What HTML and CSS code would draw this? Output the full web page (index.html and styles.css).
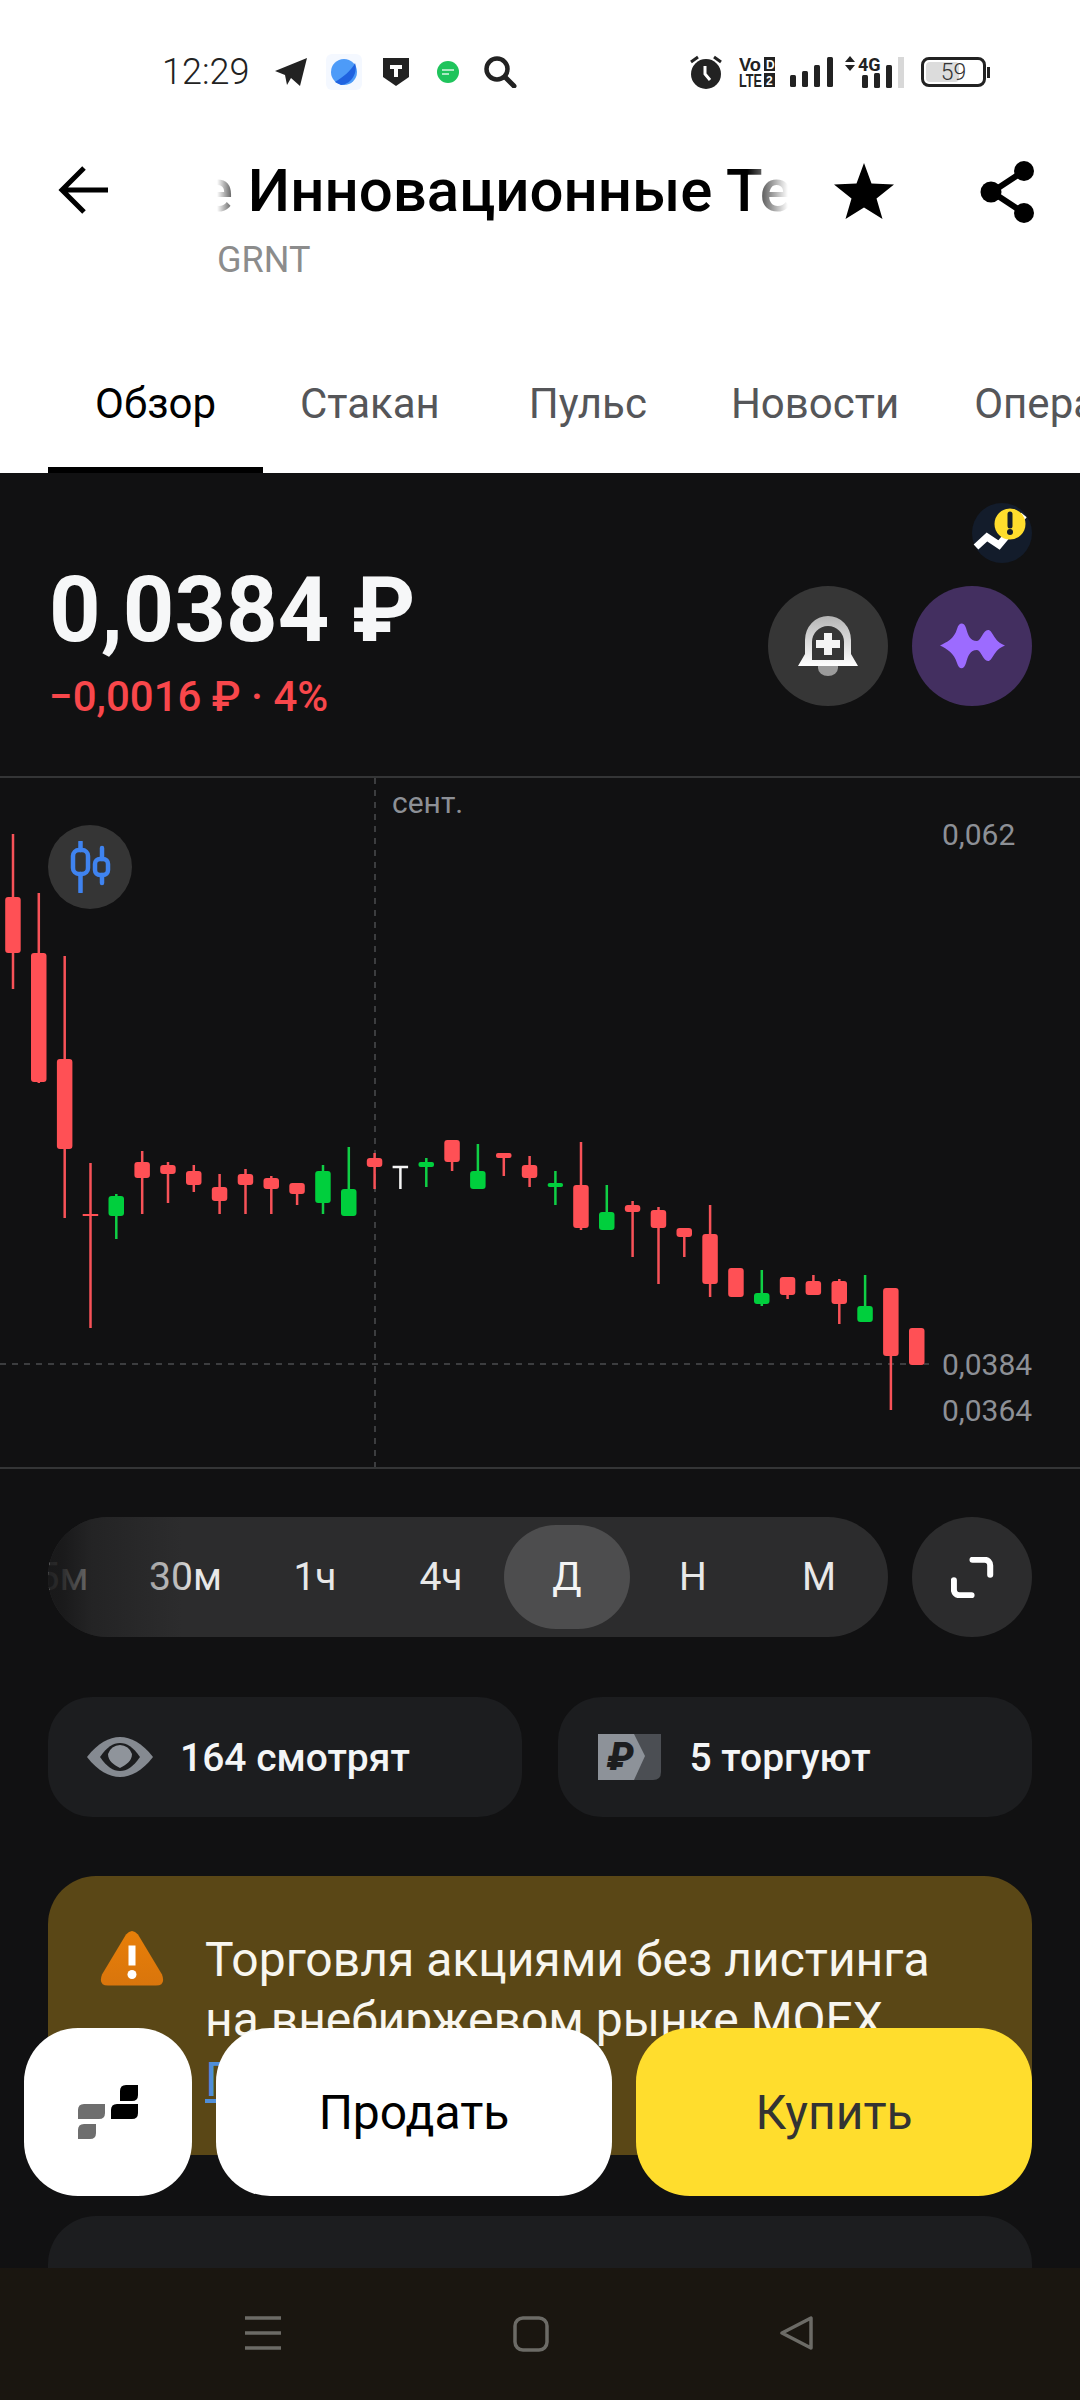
FILE: index.html
```html
<!DOCTYPE html>
<html lang="ru">
<head>
<meta charset="utf-8">
<title>GRNT</title>
<link rel="stylesheet" href="styles.css">
</head>
<body>
<div class="phone">
  <div class="status">
    <div class="status-left">
      <span class="time">12:29</span>
      <svg class="st-tg" viewBox="0 0 32 28"><path d="M32 0 25 28 16 20 12 27 10 17 0 13Z" fill="#222"/></svg>
      <svg class="st-planet" viewBox="0 0 36 36"><rect width="36" height="36" rx="6" fill="#f4f8ff"/><circle cx="18" cy="18" r="13" fill="#4d9bf8"/><path d="M9 28C16 24 26 16 29 9 32 18 26 30 15 31Z" fill="#1f62e0"/></svg>
      <svg class="st-shield" viewBox="0 0 26 28"><path d="M0 0H26V19L13 28 0 19Z" fill="#222"/><path d="M7 7H19V11H15V19H11V11H7Z" fill="#fff"/></svg>
      <svg class="st-msg" viewBox="0 0 22 22"><circle cx="11" cy="11" r="11" fill="#1fc45c"/><path d="M5 9H17M5 13H12" stroke="#d8f5e2" stroke-width="1.6"/></svg>
      <svg class="st-search" viewBox="0 0 34 32"><circle cx="14" cy="13" r="10.5" fill="none" stroke="#222" stroke-width="4.5"/><path d="M22 21 31 30" stroke="#222" stroke-width="5" stroke-linecap="round"/></svg>
    </div>
    <div class="status-right">
      <svg class="st-alarm" viewBox="0 0 32 34"><circle cx="16" cy="19" r="15" fill="#222"/><path d="M15 11V19L20 25" stroke="#fff" stroke-width="3" fill="none"/><path d="M1 7 8 2M31 7 24 2" stroke="#222" stroke-width="3"/></svg>
      <svg class="st-volte" viewBox="0 0 36 30"><text x="0" y="14" class="st-small" textLength="22" lengthAdjust="spacingAndGlyphs">Vo</text><rect x="25" y="0" width="11" height="14" fill="#222"/><text x="27" y="12" class="st-tiny">D</text><text x="0" y="30" class="st-small" textLength="23" lengthAdjust="spacingAndGlyphs">LTE</text><rect x="25" y="16" width="11" height="14" fill="#222"/><text x="27" y="28" class="st-tiny">2</text></svg>
      <svg class="st-bars" viewBox="0 0 44 30"><rect x="0" y="18" width="6" height="12" rx="1.5"/><rect x="12" y="14" width="6" height="16" rx="1.5"/><rect x="24" y="8" width="6" height="22" rx="1.5"/><rect x="37" y="0" width="6" height="30" rx="1.5"/></svg>
      <svg class="st-4g" viewBox="0 0 60 32"><path d="M0 6 5 0 10 6ZM0 9H10L5 15Z" fill="#222"/><text x="13" y="15" class="st-4gt">4G</text><rect x="17" y="19" width="6" height="13" rx="1.5"/><rect x="29" y="17" width="6" height="15" rx="1.5"/><rect x="41" y="9" width="6" height="23" rx="1.5"/><rect x="53" y="1" width="6" height="31" fill="#d8d8d8"/></svg>
      <div class="battery"><span class="battery-fill"></span><span class="battery-num">59</span></div>
    </div>
  </div>

  <div class="header">
    <svg class="back" viewBox="0 0 52 50"><path d="M50 25H6M26 3 4 25 26 47" fill="none" stroke="#000" stroke-width="5"/></svg>
    <div class="titles">
      <div class="title-clip"><span class="title">Городские Инновационные Технологии</span></div>
      <div class="ticker">GRNT</div>
    </div>
    <svg class="star" viewBox="0 0 60 56"><path d="M30 0 37.5 20.5 60 21.5 42.5 35.5 48.5 56 30 44.5 11.5 56 17.5 35.5 0 21.5 22.5 20.5Z"/></svg>
    <svg class="share" viewBox="0 0 56 62"><path d="M44 10 12 31 44 52" fill="none" stroke="#000" stroke-width="6"/><circle cx="44" cy="10" r="10"/><circle cx="11" cy="31" r="10.5"/><circle cx="44" cy="52" r="10"/></svg>
  </div>

  <div class="tabs">
    <div class="tab active">Обзор</div>
    <div class="tab">Стакан</div>
    <div class="tab">Пульс</div>
    <div class="tab">Новости</div>
    <div class="tab">Операции</div>
  </div>

  <main class="dark">
    <section class="quote">
      <div class="prices">
        <div class="price">0,0384 ₽</div>
        <div class="change">−0,0016 ₽ · 4%</div>
      </div>
      <div class="quote-side">
        <svg class="notice" viewBox="0 0 60 60"><circle cx="30" cy="30" r="30" fill="#131c2b"/><path d="M4 44 15 34 27 42 52 12" fill="none" stroke="#fff" stroke-width="7"/><circle cx="38" cy="21" r="15.5" fill="#ffdd2d"/><path d="M38 11V23" stroke="#131c2b" stroke-width="5" stroke-linecap="round"/><circle cx="38" cy="29" r="3" fill="#131c2b"/></svg>
        <div class="actions">
          <div class="round round-gray">
            <svg class="bell" viewBox="0 0 60 60">
              <defs><linearGradient id="bellg" x1="0" y1="0" x2="0" y2="1"><stop offset="0" stop-color="#b5b5b5"/><stop offset="1" stop-color="#fff"/></linearGradient></defs>
              <path d="M20 50H40V52A10 8 0 0 1 20 52Z" fill="#9b9b9b"/>
              <path d="M7 24A23 24 0 0 1 53 24V38L60 50H0L7 38Z" fill="url(#bellg)"/>
              <path d="M14 44V26A16 16 0 0 1 46 26V44Z" fill="#363636"/>
              <path d="M26 17H34V24H42V32H34V39H26V32H18V24H26Z" fill="#f4f4f4"/>
            </svg>
          </div>
          <div class="round round-purple">
            <svg class="wave" viewBox="0 0 66 48"><path d="M1 23.500C8 20 15 17 18 7 20 0 25 0 27 6 29 13 31 19 38 19 42 19 44 8 49 8 54 8 54 19 66 23.500 54 28 54 39 49 39 44 39 42 28 38 28 31 28 29 34 27 41 25 48 20 48 18 41 15 31 8 27 1 23.500Z" fill="#9c6bff"/></svg>
          </div>
        </div>
      </div>
    </section>

    <section class="chart">
      <svg class="chart-svg" viewBox="0 778 1080 689">
        <path class="dash" d="M375 778V1468M0 1364H929"/>
        <text class="axis" x="392" y="813">сент.</text>
        <text class="axis" x="942" y="845">0,062</text>
        <text class="axis" x="942" y="1375">0,0384</text>
        <text class="axis" x="942" y="1421">0,0364</text>
        <path class="w-r" d="M13 834V989M38.800 893V1083M64.700 956V1218M90.500 1163V1328M142.200 1151V1214M168 1162V1203M193.800 1165V1192M219.600 1174V1214M245.500 1169V1214M271.300 1176V1214M297.100 1183V1205M374.600 1153V1189M452.100 1140V1171M503.800 1153V1176M529.600 1156V1187M581 1142V1230M632.600 1201V1257M658.500 1207V1284M684.300 1228V1257M710.100 1205V1297M787.600 1277V1299M813.400 1275V1295M839.300 1279V1324M890.900 1288V1410"/>
        <path class="w-g" d="M116.300 1194V1239M323 1165V1214M348.800 1147V1216M426.300 1158V1187M477.900 1144V1189M555.400 1171V1205M606.800 1185V1230M761.800 1270V1306M865.100 1275V1322"/>
        <path class="w-w" d="M400.400 1166V1189M392.600 1167H408.100"/>
        <g class="b-r">
          <rect x="5.200" y="897" width="15.500" height="56" rx="3"/>
          <rect x="31" y="953" width="15.500" height="129" rx="3"/>
          <rect x="56.900" y="1059" width="15.500" height="90" rx="3"/>
          <rect x="82.700" y="1214" width="15.500" height="2"/>
          <rect x="134.400" y="1162" width="15.500" height="16" rx="3"/>
          <rect x="160.200" y="1165" width="15.500" height="9" rx="3"/>
          <rect x="186" y="1171" width="15.500" height="14" rx="3"/>
          <rect x="211.800" y="1187" width="15.500" height="14" rx="3"/>
          <rect x="237.700" y="1174" width="15.500" height="11" rx="3"/>
          <rect x="263.500" y="1178" width="15.500" height="11" rx="3"/>
          <rect x="289.300" y="1183" width="15.500" height="11" rx="3"/>
          <rect x="366.800" y="1158" width="15.500" height="9" rx="3"/>
          <rect x="444.300" y="1140" width="15.500" height="22" rx="3"/>
          <rect x="496" y="1153" width="15.500" height="5" rx="2"/>
          <rect x="521.800" y="1165" width="15.500" height="13" rx="3"/>
          <rect x="573.200" y="1185" width="15.500" height="43" rx="3"/>
          <rect x="624.800" y="1205" width="15.500" height="7" rx="3"/>
          <rect x="650.700" y="1210" width="15.500" height="18" rx="3"/>
          <rect x="676.500" y="1228" width="15.500" height="9" rx="3"/>
          <rect x="702.300" y="1234" width="15.500" height="50" rx="3"/>
          <rect x="728.200" y="1268" width="15.500" height="29" rx="3"/>
          <rect x="779.800" y="1277" width="15.500" height="18" rx="3"/>
          <rect x="805.600" y="1281" width="15.500" height="14" rx="3"/>
          <rect x="831.500" y="1281" width="15.500" height="23" rx="3"/>
          <rect x="883.100" y="1288" width="15.500" height="68" rx="3"/>
          <rect x="909" y="1328" width="15.500" height="37" rx="3"/>
        </g>
        <g class="b-g">
          <rect x="108.500" y="1196" width="15.500" height="20" rx="3"/>
          <rect x="315.200" y="1171" width="15.500" height="32" rx="3"/>
          <rect x="341" y="1189" width="15.500" height="27" rx="3"/>
          <rect x="418.500" y="1162" width="15.500" height="5" rx="2"/>
          <rect x="470.100" y="1171" width="15.500" height="18" rx="3"/>
          <rect x="547.600" y="1183" width="15.500" height="4" rx="2"/>
          <rect x="599" y="1212" width="15.500" height="18" rx="3"/>
          <rect x="754" y="1293" width="15.500" height="11" rx="3"/>
          <rect x="857.300" y="1306" width="15.500" height="16" rx="3"/>
        </g>
      </svg>
      <div class="chart-type">
        <svg class="chart-type-icon" viewBox="0 0 42 52"><path d="M11.500 1V9M11.500 33V51M33 7V18M33 34V42" stroke="#3f83f0" stroke-width="4.500" stroke-linecap="round"/><rect x="4" y="9" width="15" height="24" rx="6" fill="none" stroke="#3f83f0" stroke-width="4.500"/><rect x="26" y="18" width="13" height="16" rx="5" fill="none" stroke="#3f83f0" stroke-width="4.500"/></svg>
      </div>
    </section>

    <section class="controls">
      <div class="frames">
        <div class="frames-row">
          <span class="frame">5м</span>
          <span class="frame frame-wide">30м</span>
          <span class="frame">1ч</span>
          <span class="frame">4ч</span>
          <span class="frame selected">Д</span>
          <span class="frame">Н</span>
          <span class="frame">М</span>
        </div>
        <span class="frames-fade"></span>
      </div>
      <div class="expand">
        <svg class="expand-icon" viewBox="0 0 46 44"><path d="M23 3H36A6 6 0 0 1 42 9V19M3 25V35A6 6 0 0 0 9 41H22" fill="none" stroke="#fff" stroke-width="6.500" stroke-linecap="round"/></svg>
      </div>
    </section>

    <section class="chips">
      <div class="chip">
        <svg class="eye" viewBox="0 0 66 40"><path d="M0 20C11 6 22 0 33 0 44 0 55 6 66 20 55 34 44 40 33 40 22 40 11 34 0 20Z" fill="#858a91"/><path d="M13 20C20 10 26 6 33 6 40 6 46 10 53 20 46 30 40 34 33 34 26 34 20 30 13 20Z" fill="#1c1d1f"/><path d="M21 17A12.500 12.500 0 0 1 45 17C45 24 39 28 33 31 27 28 21 24 21 17Z" fill="#8f949b"/></svg>
        <span class="chip-text">164 смотрят</span>
      </div>
      <div class="chip chip-right">
        <svg class="rub" viewBox="0 0 63 46"><path d="M20 0H63V38Q63 46 55 46H20Z" fill="#4b4e53"/><path d="M0 0H36L47 22 36 46H0Z" fill="#8d9299"/><text x="9" y="36" class="rub-sign">₽</text></svg>
        <span class="chip-text">5 торгуют</span>
      </div>
    </section>

    <section class="warning">
      <svg class="warn-icon" viewBox="0 0 64 56">
        <defs><linearGradient id="warng" x1="0" y1="0" x2="0" y2="1"><stop offset="0" stop-color="#e87f08"/><stop offset="1" stop-color="#d9750c"/></linearGradient></defs>
        <path d="M26 4Q32 -3 38 4L62 44Q66 55 56 55H8Q-2 55 2 44Z" fill="url(#warng)"/>
        <path d="M32 15V35" stroke="#fff" stroke-width="7"/><circle cx="32" cy="44" r="4.500" fill="#fff"/>
      </svg>
      <div class="warn-text">
        <div>Торговля акциями без листинга</div>
        <div>на внебиржевом рынке MOEX</div>
        <a class="warn-link">Подробнее</a>
      </div>
    </section>

    <section class="next-card"></section>
  </main>

  <nav class="nav">
    <svg class="nav-menu" viewBox="0 0 36 34"><path d="M0 2H36M0 17H36M0 32H36" stroke="#6c6b66" stroke-width="3.500"/></svg>
    <svg class="nav-home" viewBox="0 0 36 36"><rect x="2" y="2" width="32" height="32" rx="8" fill="none" stroke="#6c6b66" stroke-width="3.500"/></svg>
    <svg class="nav-back" viewBox="0 0 34 34"><path d="M31 2V32L2 17Z" fill="none" stroke="#6c6b66" stroke-width="3.500" stroke-linejoin="round"/></svg>
  </nav>

  <div class="trade">
    <div class="trade-btn trade-logo">
      <svg class="logo" viewBox="0 0 60 54"><path d="M48 0H60V10Q60 16 54 16H42V6Q42 0 48 0Z" fill="#000"/><path d="M39 19H60V28Q60 34 54 34H33V25Q33 19 39 19Z" fill="#000"/><path d="M6 19H27V28Q27 34 21 34H0V25Q0 19 6 19Z" fill="#6e6e6e"/><path d="M6 39H18V48Q18 54 12 54H0V45Q0 39 6 39Z" fill="#6e6e6e"/></svg>
    </div>
    <div class="trade-btn trade-sell">Продать</div>
    <div class="trade-btn trade-buy">Купить</div>
  </div>
</div>
</body>
</html>
```

FILE: styles.css
```css
* { box-sizing: border-box; }
html, body { margin: 0; padding: 0; background: #111112; }
body { font-family: Roboto, "Noto Sans", sans-serif; }
.phone {
  position: relative;
  width: 1080px;
  height: 2400px;
  overflow: hidden;
  display: flex;
  flex-direction: column;
  background: #fff;
}
svg { display: block; flex-shrink: 0; }

/* status bar */
.status {
  height: 144px;
  flex-shrink: 0;
  display: flex;
  align-items: center;
  justify-content: space-between;
  padding: 0 94px 0 162px;
}
.status-left, .status-right { display: flex; align-items: center; }
.time { font-size: 36px; font-weight: 300; color: #222; width: 88px; white-space: nowrap; }
.st-tg { width: 32px; height: 28px; margin-left: 25px; }
.st-planet { width: 36px; height: 36px; margin-left: 19px; }
.st-shield { width: 26px; height: 28px; margin-left: 21px; }
.st-msg { width: 22px; height: 22px; margin-left: 28px; }
.st-search { width: 34px; height: 32px; margin-left: 24px; }
.st-alarm { width: 32px; height: 34px; }
.st-volte { width: 36px; height: 30px; margin-left: 17px; }
.st-small { font-family: "Liberation Sans", sans-serif; font-size: 18px; font-weight: 700; fill: #222; }
.st-tiny { font-family: "Liberation Sans", sans-serif; font-size: 12px; font-weight: 700; fill: #fff; }
.st-bars { width: 44px; height: 30px; margin-left: 15px; fill: #222; }
.st-4g { width: 60px; height: 32px; margin-left: 11px; fill: #222; }
.st-4gt { font-family: Roboto, sans-serif; font-size: 18px; font-weight: 700; fill: #222; }
.battery {
  position: relative;
  width: 65px;
  height: 30px;
  margin-left: 16px;
  border: 3px solid #222;
  border-radius: 8px;
  display: flex;
  align-items: center;
  justify-content: center;
}
.battery::after {
  content: "";
  position: absolute;
  right: -7px;
  top: 7px;
  width: 3px;
  height: 11px;
  background: #222;
}
.battery-fill {
  position: absolute;
  left: 2px;
  top: 2px;
  bottom: 2px;
  width: 33px;
  background: #dcdcdc;
  border-radius: 4px;
}
.battery-num { position: relative; font-size: 23px; font-weight: 300; color: #333; }

/* header */
.header {
  height: 186px;
  flex-shrink: 0;
  display: flex;
  align-items: flex-start;
  padding-left: 58px;
}
.back { width: 52px; height: 50px; margin-top: 21px; }
.titles { width: 573px; margin-left: 107px; }
.title-clip {
  width: 573px;
  height: 70px;
  margin-top: 12px;
  overflow: hidden;
  white-space: nowrap;
  -webkit-mask-image: linear-gradient(90deg, transparent 0, #000 24px, #000 530px, transparent 571px);
  mask-image: linear-gradient(90deg, transparent 0, #000 24px, #000 530px, transparent 571px);
}
.title {
  display: inline-block;
  margin-left: -280px;
  font-size: 60px;
  line-height: 70px;
  font-weight: 500;
  color: #000;
}
.ticker { margin-top: 13px; font-size: 36px; line-height: 42px; color: #8c8c8c; }
.star { width: 60px; height: 56px; margin: 19px 0 0 44px; fill: #000; }
.share { width: 56px; height: 62px; margin: 17px 0 0 86px; fill: #000; }

/* tabs */
.tabs {
  height: 143px;
  flex-shrink: 0;
  display: flex;
  padding-left: 48px;
  white-space: nowrap;
}
.tab {
  position: relative;
  padding: 49px 42px 0;
  font-size: 42px;
  line-height: 50px;
  font-weight: 450;
  color: #555659;
}
.tab:nth-child(2) { margin-left: -5px; }
.tab:nth-child(3) { margin-left: 5px; }
.tab:nth-child(5) { margin-left: -9px; }
.tab.active { color: #000; padding: 49px 47px 0; }
.tab.active::after {
  content: "";
  position: absolute;
  left: 0;
  right: 0;
  bottom: 0;
  height: 6px;
  background: #000;
}

/* dark content */
.dark {
  flex: 1;
  min-height: 0;
  overflow: hidden;
  display: flex;
  flex-direction: column;
  background: #111112;
}
.quote {
  height: 305px;
  flex-shrink: 0;
  display: flex;
  justify-content: space-between;
  padding: 30px 48px 0 49px;
  border-bottom: 2px solid #343536;
}
.prices { padding-top: 60px; }
.price { font-size: 90px; line-height: 96px; font-weight: 700; color: #f6f7f8; }
.change { margin-top: 13px; font-size: 42px; line-height: 50px; font-weight: 500; color: #f8474b; }
.quote-side { display: flex; flex-direction: column; align-items: flex-end; }
.notice { width: 60px; height: 60px; }
.actions { display: flex; gap: 24px; margin-top: 23px; }
.round { width: 120px; height: 120px; border-radius: 50%; display: flex; align-items: center; justify-content: center; }
.round-gray { background: #363636; }
.round-purple { background: #432f60; }
.bell { width: 60px; height: 60px; }
.wave { width: 66px; height: 48px; }

/* chart */
.chart {
  position: relative;
  height: 691px;
  flex-shrink: 0;
  border-bottom: 2px solid #343536;
}
.chart-svg { width: 1080px; height: 689px; }
.dash { fill: none; stroke: #3c3d3f; stroke-width: 2; stroke-dasharray: 6 6; }
.axis { font-family: Roboto, sans-serif; font-size: 30px; fill: #8d9096; }
.w-r { stroke: #f85258; stroke-width: 2.500; fill: none; }
.w-g { stroke: #10cf45; stroke-width: 2.500; fill: none; }
.w-w { stroke: #f5f5f5; stroke-width: 2.500; fill: none; }
.b-r { fill: #ff5055; }
.b-g { fill: #00cf3d; }
.chart-type {
  position: absolute;
  left: 48px;
  top: 47px;
  width: 84px;
  height: 84px;
  border-radius: 50%;
  background: #353535;
  display: flex;
  align-items: center;
  justify-content: center;
}
.chart-type-icon { width: 42px; height: 52px; }

/* controls */
.controls { display: flex; gap: 24px; margin: 48px 48px 0; flex-shrink: 0; }
.frames {
  position: relative;
  width: 840px;
  height: 120px;
  border-radius: 60px;
  background: #2c2c2d;
  overflow: hidden;
}
.frames-row { display: flex; margin-left: -48px; height: 120px; align-items: center; }
.frame {
  width: 126px;
  height: 104px;
  flex-shrink: 0;
  border-radius: 52px;
  display: flex;
  align-items: center;
  justify-content: center;
  font-size: 39px;
  color: #e8e8e8;
}
.frame-wide { padding-right: 7px; }
.frame.selected { background: #4d4d4e; color: #f4f4f4; }
.frames-fade {
  position: absolute;
  left: 0;
  top: 0;
  bottom: 0;
  width: 145px;
  background: linear-gradient(90deg, rgba(24, 24, 25, 0.95) 0, rgba(24, 24, 25, 0.9) 10%, rgba(30, 30, 31, 0.6) 30%, rgba(44, 44, 45, 0.2) 92%, rgba(44, 44, 45, 0) 100%);
}
.expand {
  width: 120px;
  height: 120px;
  border-radius: 50%;
  background: #2c2c2d;
  display: flex;
  align-items: center;
  justify-content: center;
}
.expand-icon { width: 43px; height: 41px; }

.chips { display: flex; gap: 36px; margin: 60px 48px 0; flex-shrink: 0; }
.chip {
  flex: 1;
  height: 120px;
  border-radius: 44px;
  background: #1c1d1f;
  display: flex;
  align-items: center;
  padding-left: 39px;
}
.chip-right { padding-left: 40px; }
.chip-text { margin-left: 27px; padding-top: 2px; font-size: 39px; font-weight: 500; color: #f4f5f6; }
.chip-right .chip-text { margin-left: 29px; }
.eye { width: 66px; height: 40px; }
.rub { width: 63px; height: 46px; }
.rub-sign { font-family: Roboto, sans-serif; font-size: 38px; font-weight: 900; font-style: italic; fill: #1c1d1f; }

.warning {
  flex-shrink: 0;
  height: 279px;
  margin: 59px 48px 0;
  padding: 54px 40px 0 52px;
  border-radius: 48px;
  background: #5a4716;
  display: flex;
  gap: 41px;
  overflow: hidden;
}
.warn-icon { width: 64px; height: 57px; }
.warn-text { font-size: 48px; line-height: 60px; color: #f8f6ef; margin-top: 0; }
.warn-link { color: #4f8ed8; text-decoration: underline; }

.next-card {
  flex-shrink: 0;
  height: 300px;
  margin: 61px 48px 0;
  border-radius: 48px;
  background: #1c1d1f;
}

/* system nav */
.nav {
  height: 132px;
  flex-shrink: 0;
  display: flex;
  align-items: flex-start;
  background: #1a1610;
  padding: 48px 0 0 245px;
}
.nav-menu { width: 36px; height: 34px; }
.nav-home { width: 36px; height: 36px; margin-left: 232px; }
.nav-back { width: 34px; height: 34px; margin-left: 231px; }

/* floating trade buttons */
.trade {
  position: absolute;
  left: 24px;
  right: 48px;
  top: 2028px;
  height: 168px;
  display: flex;
  gap: 24px;
}
.trade-btn {
  height: 168px;
  border-radius: 54px;
  display: flex;
  align-items: center;
  justify-content: center;
  font-size: 48px;
}
.trade-logo { width: 168px; background: #fff; }
.trade-sell { width: 396px; background: #fff; color: #000; }
.trade-buy { width: 396px; background: #ffdd2d; color: #333; }
.logo { width: 60px; height: 54px; }
```
